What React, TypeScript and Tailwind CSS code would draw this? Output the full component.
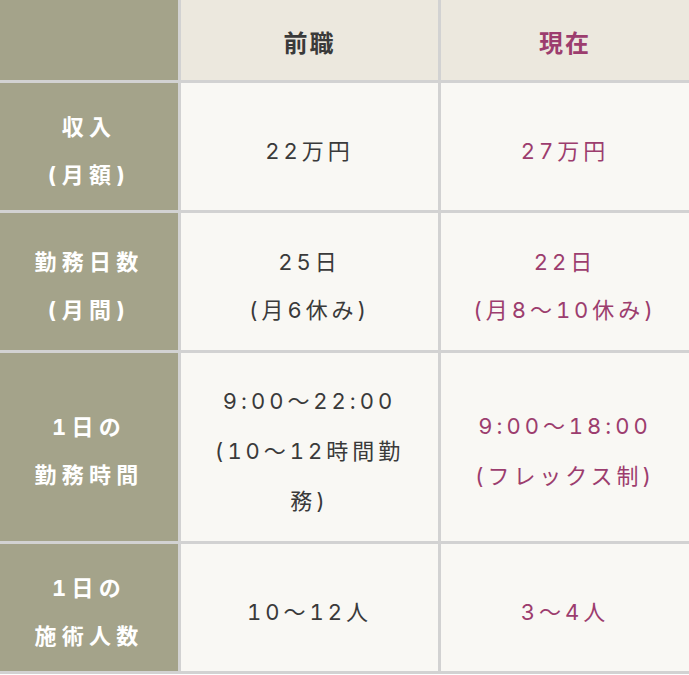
import React from "react";

const font = { fontFamily: '"Inter", "Noto Sans CJK JP", "Noto Sans", sans-serif' };

function Head({ children }: { children: React.ReactNode }) {
  return (
    <div className="flex flex-col items-center justify-center bg-[#a4a38a] pt-2 text-[22px] font-bold leading-[48px] tracking-[0.24em] text-white tabular-nums">
      {children}
    </div>
  );
}

function Cell({ children, pink, lh = "leading-[48px]" }: { children: React.ReactNode; pink?: boolean; lh?: string }) {
  return (
    <div
      className={`flex flex-col items-center justify-center bg-[#f9f8f4] px-4 pt-2 text-center text-[22px] tracking-[0.18em] tabular-nums ${lh} ${
        pink ? "text-[#9c3d6e]" : "text-[#3a3a3a]"
      }`}
    >
      {children}
    </div>
  );
}

export default function App() {
  return (
    <div className="min-h-[675px] w-[689px] bg-white" style={font}>
      <div className="grid grid-cols-[178px_257px_1fr] grid-rows-[80px_127px_137px_188px_127px] gap-[3px] bg-[#d2d2d2] pb-[3px]">
        <div className="bg-[#a4a38a]" />
        <div className="flex items-center justify-center bg-[#ece8de] pt-2 text-[24px] font-bold tracking-[0.08em] text-[#3a3a3a]">
          前職
        </div>
        <div className="flex items-center justify-center bg-[#ece8de] pt-2 text-[24px] font-bold tracking-[0.08em] text-[#9c3d6e]">
          現在
        </div>

        <Head>
          <span>収入</span>
          <span>(月額)</span>
        </Head>
        <Cell>
          <span>22万円</span>
        </Cell>
        <Cell pink>
          <span>27万円</span>
        </Cell>

        <Head>
          <span>勤務日数</span>
          <span>(月間)</span>
        </Head>
        <Cell>
          <span>25日</span>
          <span>(月6休み)</span>
        </Cell>
        <Cell pink>
          <span>22日</span>
          <span>(月8〜10休み)</span>
        </Cell>

        <Head>
          <span>1日の</span>
          <span>勤務時間</span>
        </Head>
        <Cell lh="leading-[50px]">
          <span className="whitespace-nowrap">9:00〜22:00</span>
          <span className="whitespace-nowrap">(10〜12時間勤</span>
          <span>務)</span>
        </Cell>
        <Cell pink lh="leading-[50px]">
          <span className="whitespace-nowrap">9:00〜18:00</span>
          <span className="whitespace-nowrap">(フレックス制)</span>
        </Cell>

        <Head>
          <span>1日の</span>
          <span>施術人数</span>
        </Head>
        <Cell>
          <span>10〜12人</span>
        </Cell>
        <Cell pink>
          <span>3〜4人</span>
        </Cell>
      </div>
    </div>
  );
}
